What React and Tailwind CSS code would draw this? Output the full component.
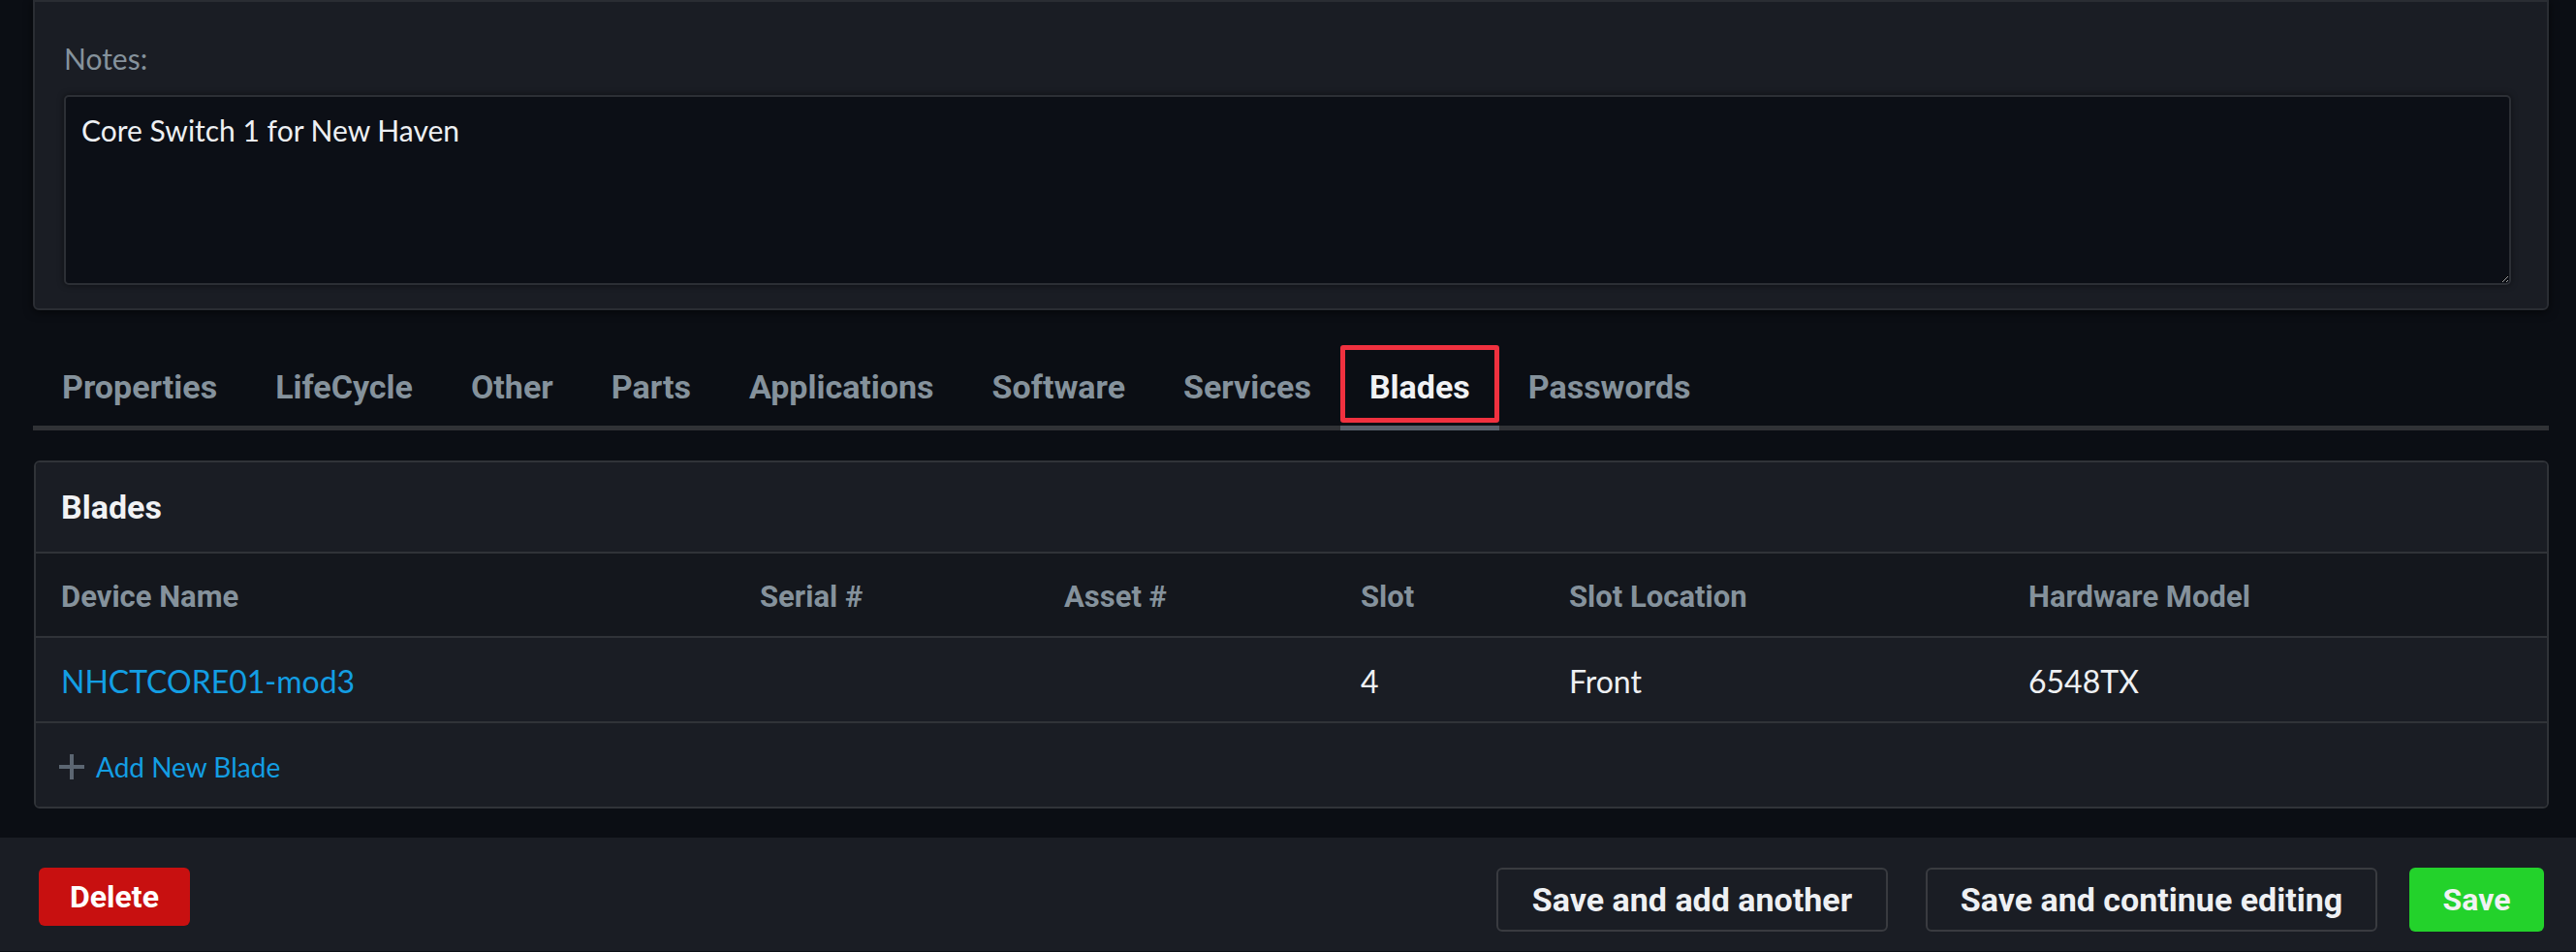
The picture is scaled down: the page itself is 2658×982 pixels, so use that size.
import React from "react";

const tabs = ["Properties", "LifeCycle", "Other", "Parts", "Applications", "Software", "Services", "Blades", "Passwords"];

const columns = ["Device Name", "Serial #", "Asset #", "Slot", "Slot Location", "Hardware Model"];

const blades = [
  { name: "NHCTCORE01-mod3", serial: "", asset: "", slot: "4", location: "Front", model: "6548TX" },
];

export default function App() {
  return (
    <div className="min-h-screen w-full bg-[#0b0e14] font-['Lato',sans-serif] text-[#eef0f3]">
      {/* Notes card */}
      <div className="ml-[34px] mr-[28px] rounded-b-[6px] border-2 border-[#2a2d33] bg-[#1a1d24] pl-[30px] pr-[37px] pt-[36px] pb-[24px] shadow-[0_2px_10px_rgba(0,0,0,0.6)]">
        <label className="block text-[30px] leading-[45px] text-[#85929c]">Notes:</label>
        <textarea
          className="mt-[15px] block h-[196px] w-full resize-y rounded-[5px] border-2 border-[#2c2f35] bg-[#0c0f16] px-[16px] py-[12px] text-[30px] leading-[45px] text-[#eef0f3] shadow-[0_0_6px_rgba(0,0,0,0.5)] outline-none"
          defaultValue="Core Switch 1 for New Haven"
        />
      </div>

      {/* Tabs */}
      <div className="ml-[34px] mr-[28px] mt-[36px] flex border-b-[5px] border-[#303236] font-['Roboto',sans-serif] font-bold">
        {tabs.map((t) => {
          const active = t === "Blades";
          return (
            <div
              key={t}
              className={active ? "-mb-[5px] border-b-[5px] border-[#58606b] pb-[3px]" : "-mb-[5px] border-b-[5px] border-transparent pb-[3px]"}
            >
              <div
                className={
                  active
                    ? "flex h-[80px] items-center rounded-[3px] border-[5px] border-[#f0313f] px-[25px] pt-[6px] text-[34px] text-[#f1f2f4]"
                    : "flex h-[80px] items-center rounded-[3px] border-[5px] border-transparent px-[25px] pt-[6px] text-[34px] text-[#85929c]"
                }
              >
                {t}
              </div>
            </div>
          );
        })}
      </div>

      {/* Blades card */}
      <div className="ml-[35px] mr-[28px] mt-[31px] overflow-hidden rounded-[6px] border-2 border-[#303338] bg-[#14171d]">
        <div className="flex h-[94px] items-center border-b-2 border-[#303338] bg-[#1a1d24] px-[26px] font-['Roboto',sans-serif] text-[34px] font-bold text-[#f1f2f4]">
          Blades
        </div>
        <div className="grid h-[87px] grid-cols-[721px_314px_306px_215px_474px_1fr] items-center border-b-2 border-[#303338] px-[26px] pt-[6px] font-['Roboto',sans-serif] text-[31px] font-bold text-[#85929c]">
          {columns.map((c) => (
            <div key={c}>{c}</div>
          ))}
        </div>
        {blades.map((b) => (
          <div
            key={b.name}
            className="grid h-[88px] grid-cols-[721px_314px_306px_215px_474px_1fr] items-center border-b-2 border-[#303338] bg-[#1a1d24] px-[26px] pt-[3px] text-[32px]"
          >
            <a href="#" className="text-[#139ee3]">{b.name}</a>
            <div>{b.serial}</div>
            <div>{b.asset}</div>
            <div>{b.slot}</div>
            <div>{b.location}</div>
            <div>{b.model}</div>
          </div>
        ))}
        <div className="flex h-[86px] items-center bg-[#1a1d24] pl-[22px] pt-[4px] text-[28px] text-[#139ee3]">
          <svg width="30" height="30" viewBox="0 0 30 30" className="mr-[10px]">
            <path d="M15 2v26M2 15h26" stroke="#5c6672" strokeWidth="4" fill="none" />
          </svg>
          <a href="#">Add New Blade</a>
        </div>
      </div>

      {/* Footer actions */}
      <div className="mt-[30px] flex h-[117px] items-start bg-[#1a1d24] pl-[40px] pr-[33px] pt-[31px] font-['Roboto',sans-serif] text-[32px] font-bold">
        <button className="flex h-[60px] w-[156px] items-center justify-center rounded-[6px] bg-[#c81010] text-white">
          Delete
        </button>
        <div className="ml-auto flex items-start">
          <button className="flex h-[66px] w-[404px] items-center justify-center rounded-[6px] border-2 border-[#393b40] text-[34px] text-[#eef0f3]">
            Save and add another
          </button>
          <button className="ml-[39px] flex h-[66px] w-[466px] items-center justify-center rounded-[6px] border-2 border-[#393b40] text-[34px] text-[#eef0f3]">
            Save and continue editing
          </button>
          <button className="ml-[33px] flex h-[66px] w-[139px] items-center justify-center rounded-[6px] bg-[#23d22b] text-[#f1f2f4]">
            Save
          </button>
        </div>
      </div>
    </div>
  );
}
